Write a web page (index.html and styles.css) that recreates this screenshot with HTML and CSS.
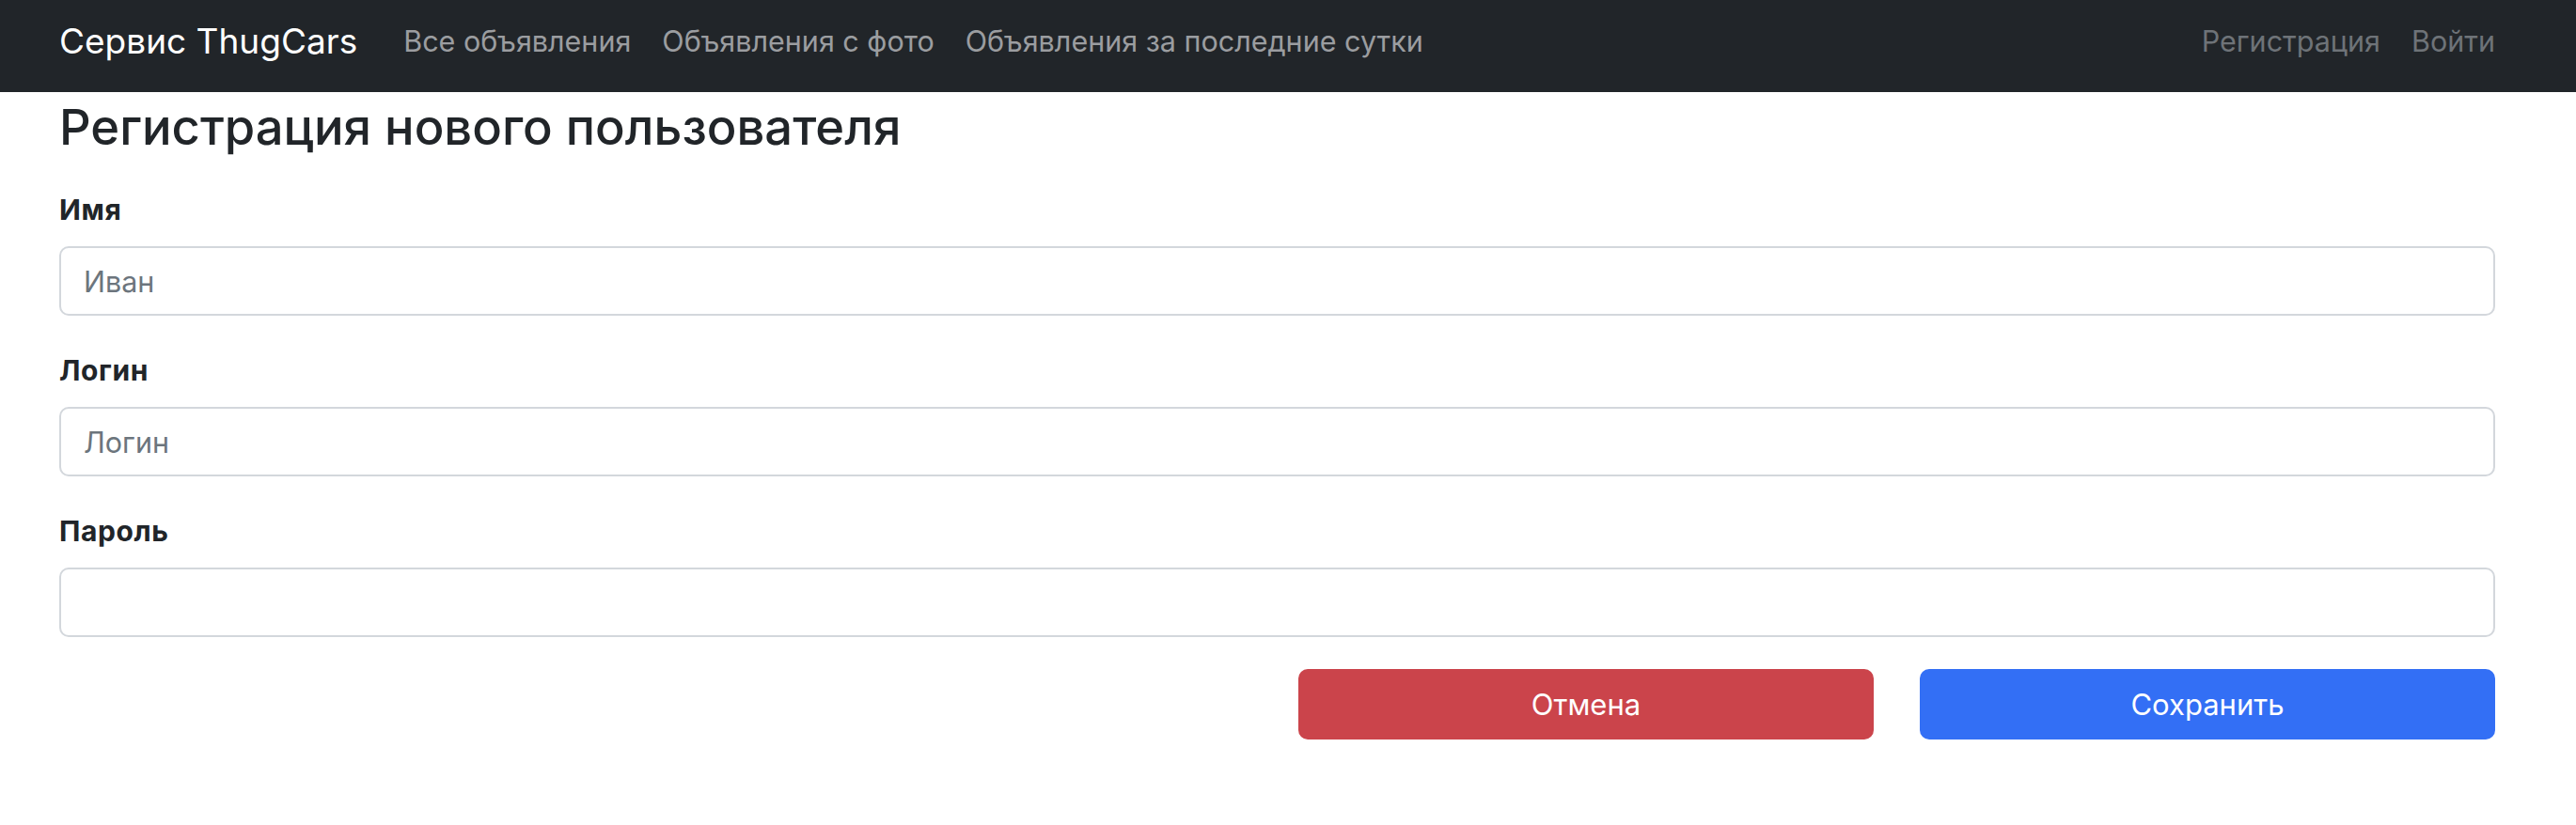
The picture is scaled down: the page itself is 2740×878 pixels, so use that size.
FILE: index.html
```html
<!DOCTYPE html>
<html lang="ru">
<head>
<meta charset="utf-8">
<title>Регистрация</title>
<link rel="stylesheet" href="styles.css">
</head>
<body>
<nav class="navbar">
  <a class="brand" href="#">Сервис ThugCars</a>
  <ul class="nav nav-main">
    <li><a href="#">Все объявления</a></li>
    <li><a href="#">Объявления с фото</a></li>
    <li><a href="#">Объявления за последние сутки</a></li>
  </ul>
  <ul class="nav nav-user">
    <li><a href="#">Регистрация</a></li>
    <li><a href="#">Войти</a></li>
  </ul>
</nav>
<main class="container">
  <h3 class="title">Регистрация нового пользователя</h3>
  <form class="form">
    <div class="field">
      <label class="label" for="name">Имя</label>
      <input class="input" id="name" type="text" placeholder="Иван">
    </div>
    <div class="field">
      <label class="label" for="login">Логин</label>
      <input class="input" id="login" type="text" placeholder="Логин">
    </div>
    <div class="field">
      <label class="label" for="pass">Пароль</label>
      <input class="input" id="pass" type="password">
    </div>
    <div class="actions">
      <button type="button" class="btn btn-cancel">Отмена</button>
      <button type="submit" class="btn btn-save">Сохранить</button>
    </div>
  </form>
</main>
</body>
</html>
```
FILE: styles.css
```css
* { box-sizing: border-box; }
html, body { margin: 0; padding: 0; }
body {
  font-family: Inter, "Liberation Sans", Arial, sans-serif;
  color: #212529;
  background: #fff;
}
a { text-decoration: none; }

.navbar {
  height: 98px;
  background: #212529;
  display: flex;
  align-items: center;
  padding: 0 86px 10px 63px;
}
.brand {
  color: #fff;
  font-size: 37px;
  line-height: 52px;
  margin-right: 49px;
}
.nav {
  list-style: none;
  margin: 0;
  padding: 0;
  display: flex;
  gap: 33px;
}
.nav a {
  font-size: 30.5px;
  line-height: 42px;
}
.nav-main a { color: #9b9da0; }
.nav-user { margin-left: auto; }
.nav-user a { color: #6e7378; }

.container {
  padding: 0 86px 0 63px;
}
.title {
  margin: 8px 0 37px;
  font-size: 52.5px;
  font-weight: 500;
  line-height: 59px;
}
.field {
  margin-bottom: 37px;
}
.label {
  display: block;
  font-size: 30px;
  font-weight: 700;
  letter-spacing: 0.6px;
  line-height: 42px;
  margin-bottom: 18px;
}
.input {
  display: block;
  width: 100%;
  height: 74px;
  padding: 0 24px;
  font-family: inherit;
  font-size: 30.5px;
  color: #212529;
  background: #fff;
  border: 2px solid #d3d7dc;
  border-radius: 10px;
  outline: none;
}
.input::placeholder { color: #6c757d; }
.field:nth-child(3) { margin-bottom: 34px; }
.actions {
  display: flex;
  justify-content: flex-end;
  gap: 49px;
}
.btn {
  width: 612px;
  height: 75px;
  border: none;
  border-radius: 10px;
  color: #fff;
  font-family: inherit;
  font-size: 31px;
  cursor: pointer;
}
.btn-cancel { background: #cb444b; }
.btn-save { background: #336ff5; }
```
